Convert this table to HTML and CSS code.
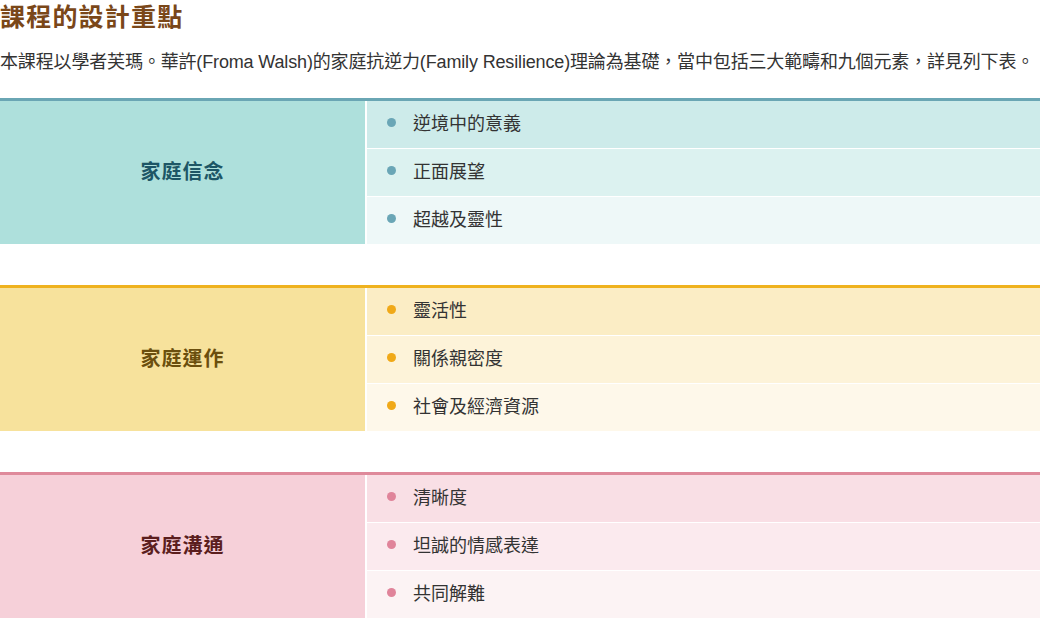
FILE: index.html
```html
<!DOCTYPE html>
<html lang="zh-Hant">
<head>
<meta charset="utf-8">
<title>課程的設計重點</title>
<link rel="stylesheet" href="styles.css">
</head>
<body>
<h2 class="title">課程的設計重點</h2>
<p class="intro">本課程以學者芙瑪。華許(Froma Walsh)的家庭抗逆力(Family Resilience)理論為基礎，當中包括三大範疇和九個元素，詳見列下表。</p>

<div class="domains">
  <section class="domain teal">
    <div class="label">家庭信念</div>
    <ul class="items">
      <li class="item r1"><span class="dot"></span>逆境中的意義</li>
      <li class="item r2"><span class="dot"></span>正面展望</li>
      <li class="item r3"><span class="dot"></span>超越及靈性</li>
    </ul>
  </section>

  <section class="domain gold">
    <div class="label">家庭運作</div>
    <ul class="items">
      <li class="item r1"><span class="dot"></span>靈活性</li>
      <li class="item r2"><span class="dot"></span>關係親密度</li>
      <li class="item r3"><span class="dot"></span>社會及經濟資源</li>
    </ul>
  </section>

  <section class="domain pink">
    <div class="label">家庭溝通</div>
    <ul class="items">
      <li class="item r1"><span class="dot"></span>清晰度</li>
      <li class="item r2"><span class="dot"></span>坦誠的情感表達</li>
      <li class="item r3"><span class="dot"></span>共同解難</li>
    </ul>
  </section>
</div>
</body>
</html>
```

FILE: styles.css
```css
* { box-sizing: border-box; }

body {
  margin: 0;
  background: #ffffff;
  font-family: "Liberation Sans", "Noto Sans CJK TC", sans-serif;
  color: #333333;
}

.title {
  margin: 0;
  font-size: 25px;
  line-height: 34px;
  font-weight: 700;
  letter-spacing: 1.2px;
  color: #7a4719;
}

.intro {
  margin: 14px 0 22px;
  font-size: 18px;
  line-height: 28px;
  letter-spacing: -0.15px;
  white-space: nowrap;
}

.domains {
  display: flex;
  flex-direction: column;
  gap: 41px;
}

.domain {
  display: flex;
  gap: 2px;
  border-top: 3px solid;
}

.label {
  width: 365px;
  flex: none;
  display: flex;
  align-items: center;
  justify-content: center;
  padding-bottom: 4px;
  font-size: 20px;
  font-weight: 700;
  letter-spacing: 1px;
}

.items {
  flex: 1;
  margin: 0;
  padding: 0;
  list-style: none;
  display: flex;
  flex-direction: column;
  gap: 1px;
}

.item {
  height: 47px;
  display: flex;
  align-items: center;
  padding-left: 20px;
  padding-bottom: 5px;
  font-size: 18px;
  color: #333333;
}

.dot {
  width: 9px;
  height: 9px;
  border-radius: 50%;
  margin-right: 17px;
  flex: none;
}

/* teal */
.teal { border-top-color: #6aa6b4; }
.teal .label { background: #aee0dc; color: #1d5666; }
.teal .r1 { background: #cdebea; }
.teal .r2 { background: #dcf2f0; }
.teal .r3 { background: #eef8f8; }
.teal .dot { background: #6aa6b6; }

/* gold */
.gold { border-top-color: #efb21e; }
.gold .label { background: #f7e29c; color: #6b4f0e; }
.gold .r1 { background: #fbedc5; }
.gold .r2 { background: #fdf3d9; }
.gold .r3 { background: #fef8ea; }
.gold .dot { background: #f0a918; }

/* pink */
.pink { border-top-color: #df8a9b; }
.pink .label { background: #f6d0d9; color: #5b1e1e; }
.pink .r1 { background: #f9dfe5; }
.pink .r2 { background: #fbeaee; }
.pink .r3 { background: #fcf3f4; }
.pink .dot { background: #e0849a; }
```
